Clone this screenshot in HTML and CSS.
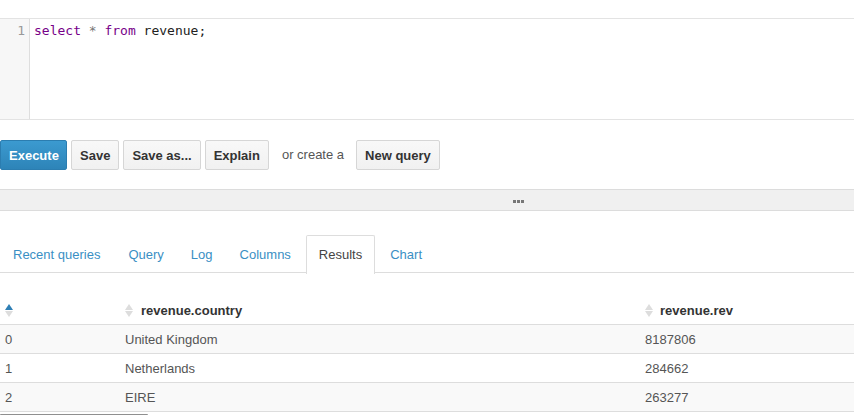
FILE: index.html
```html
<!DOCTYPE html>
<html>
<head>
<meta charset="utf-8">
<link rel="stylesheet" href="styles.css">
</head>
<body>
<div class="editor">
  <div class="gutter"><div class="lineno">1</div></div>
  <div class="code"><span class="kw">select</span> <span class="op">*</span> <span class="kw">from</span> <span class="id">revenue;</span></div>
</div>

<div class="toolbar">
  <button class="btn primary">Execute</button>
  <button class="btn">Save</button>
  <button class="btn">Save as...</button>
  <button class="btn">Explain</button>
  <span class="or">or create a</span>
  <button class="btn">New query</button>
</div>

<div class="splitter"><span class="dots"><i></i><i></i><i></i></span></div>

<ul class="tabs">
  <li class="tab">Recent queries</li>
  <li class="tab">Query</li>
  <li class="tab">Log</li>
  <li class="tab">Columns</li>
  <li class="tab active">Results</li>
  <li class="tab">Chart</li>
</ul>

<table class="results">
  <thead>
    <tr>
      <th class="c0"><span class="sort"><span class="up on"></span><span class="down"></span></span></th>
      <th class="c1"><span class="sort"><span class="up"></span><span class="down"></span></span>revenue.country</th>
      <th class="c2"><span class="sort"><span class="up"></span><span class="down"></span></span>revenue.rev</th>
    </tr>
  </thead>
  <tbody>
    <tr class="odd"><td>0</td><td>United Kingdom</td><td>8187806</td></tr>
    <tr><td>1</td><td>Netherlands</td><td>284662</td></tr>
    <tr class="odd"><td>2</td><td>EIRE</td><td>263277</td></tr>
  </tbody>
</table>
<div class="hscroll"><div class="thumb"></div></div>
</body>
</html>
```
FILE: styles.css
```css
html, body {
  margin: 0;
  padding: 0;
  background: #fff;
  font-family: "Liberation Sans", Arial, sans-serif;
  font-size: 13px;
  color: #333;
  overflow: hidden;
}

.editor {
  margin-top: 18px;
  height: 100px;
  border-top: 1px solid #e3e3e3;
  border-bottom: 1px solid #e3e3e3;
  display: flex;
}
.gutter {
  width: 29px;
  background: #f7f7f7;
  border-right: 1px solid #dedede;
  flex: none;
}
.lineno, .code {
  font-family: "DejaVu Sans Mono", monospace;
  font-size: 13px;
  line-height: 15px;
  padding-top: 4px;
}
.lineno {
  color: #999;
  text-align: right;
  padding-right: 4px;
}
.code {
  padding-left: 4px;
  color: #000;
  white-space: pre;
}
.kw { color: #708; }
.op { color: #777; }
.id { color: #222; }

.toolbar {
  margin-top: 20px;
  display: flex;
  align-items: center;
  gap: 4px;
  height: 30px;
}
.btn {
  height: 30px;
  padding: 0 8px;
  font-family: "Liberation Sans", Arial, sans-serif;
  font-size: 13px;
  font-weight: bold;
  color: #333;
  background: linear-gradient(#f8f8f8, #f1f1f1);
  border: 1px solid #d6d6d6;
  border-radius: 2px;
  margin: 0;
}
.btn.primary {
  width: 67px;
  color: #fff;
  background: linear-gradient(#3b9ad0, #2d84b8);
  border-color: #2b7db0;
}
.or {
  color: #555;
  margin: 0 8px 0 9px;
  padding-bottom: 2px;
}

.splitter {
  margin-top: 19px;
  height: 20px;
  background: #f0f0f0;
  border-top: 1px solid #dcdcdc;
  border-bottom: 1px solid #dcdcdc;
  display: flex;
  align-items: center;
}
.dots {
  display: flex;
  gap: 1px;
  margin-left: 513px;
  margin-top: 2px;
}
.dots i {
  display: block;
  width: 3px;
  height: 3px;
  background: #777;
}

.tabs {
  list-style: none;
  margin: 24px 0 0;
  padding: 0;
  display: flex;
  gap: 2px;
  border-bottom: 1px solid #ddd;
  height: 37px;
}
.tab {
  padding: 0 12px;
  border: 1px solid transparent;
  border-bottom: none;
  color: #3a8fc4;
  line-height: 36px;
  padding-top: 1px;
  margin-bottom: -1px;
  background: transparent;
}
.tab:nth-child(3) { margin-left: -1px; }
.tab:nth-child(4) { margin-left: -1px; }
.tab.active {
  color: #444;
  border-color: #ddd;
  background: #fff;
  border-radius: 2px 2px 0 0;
  height: 37px;
}

.results {
  margin-top: 23px;
  width: 854px;
  border-collapse: collapse;
  table-layout: fixed;
}
.results th, .results td {
  text-align: left;
  padding: 0 5px;
  height: 28px;
  border-bottom: 1px solid #ddd;
  white-space: nowrap;
}
.results th {
  font-weight: bold;
  color: #333;
}
.results td { color: #555; }
.c0 { width: 110px; }
.c1 { width: 510px; }
.c2 { width: 204px; }
.odd td { background: #f9f9f9; }

.sort {
  display: inline-flex;
  flex-direction: column;
  gap: 1px;
  vertical-align: middle;
  margin-right: 8px;
  margin-top: -2px;
}
.c2 .sort { margin-right: 7px; }
.sort span {
  display: block;
  width: 0;
  height: 0;
  border-left: 4px solid transparent;
  border-right: 4px solid transparent;
}
.sort .up { border-bottom: 6px solid #ddd; }
.sort .down { border-top: 6px solid #ddd; }
.sort .up.on { border-bottom-color: #2f7fb5; }

.hscroll {
  margin-top: 2px;
  height: 3px;
}
.thumb {
  width: 148px;
  height: 3px;
  background: #8f8f8f;
  border-radius: 1px;
}
```
